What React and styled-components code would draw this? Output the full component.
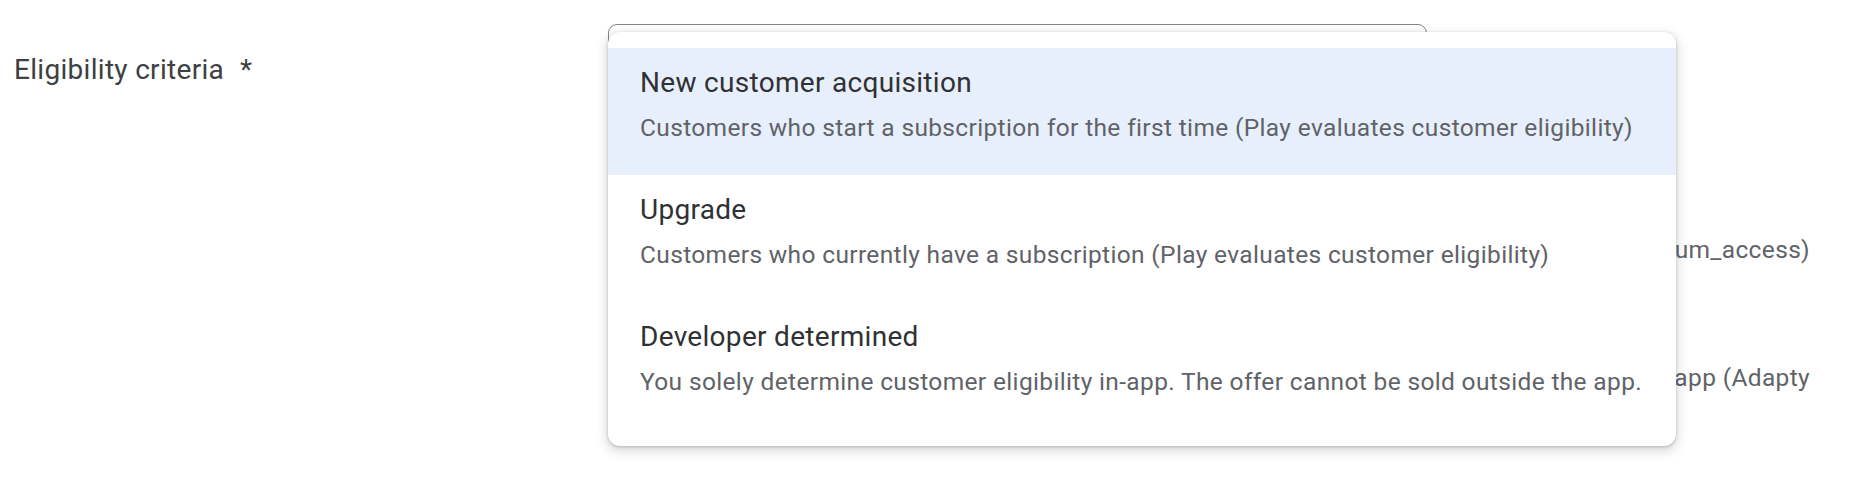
import React from 'react';
import styled, { createGlobalStyle } from 'styled-components';

const GlobalStyle = createGlobalStyle`
  html, body {
    margin: 0;
    padding: 0;
    background: #ffffff;
  }
  body {
    font-family: Roboto, "Liberation Sans", Arial, sans-serif;
    -webkit-font-smoothing: antialiased;
  }
`

const Page = styled.div`
  width: 1854px;
  height: 484px;
  overflow: hidden;
  background: #ffffff;
`

const FormRow = styled.div`
  display: flex;
  padding-left: 14px;
`

const Label = styled.div`
  width: 594px;
  flex-shrink: 0;
  padding-top: 50px;
  font-size: 28px;
  line-height: 40px;
  letter-spacing: 0.3px;
  color: #3c4043;
`

const Required = styled.span`
  margin-left: 16px;
`

const Field = styled.div`
  position: relative;
  width: 1202px;
  padding-top: 24px;
`

const SelectBox = styled.div`
  width: 819px;
  height: 96px;
  border: 1.5px solid #80868b;
  border-radius: 9px;
  box-sizing: border-box;
`

const Behind = styled.div`
  display: flex;
  flex-direction: column;
  gap: 92px;
  padding-top: 112px;
`

const BehindLine = styled.div`
  text-align: right;
  white-space: nowrap;
  font-size: 24.5px;
  line-height: 36px;
  letter-spacing: 0.35px;
  color: #5f6368;
`

const Menu = styled.ul`
  position: absolute;
  top: 32px;
  left: 0;
  z-index: 2;
  width: 1068px;
  margin: 0;
  padding: 16px 0 17px;
  list-style: none;
  background: #ffffff;
  border-radius: 12px;
  box-shadow: 0 1px 3px rgba(60, 64, 67, 0.3), 0 4px 10px 3px rgba(60, 64, 67, 0.15);
`

const Option = styled.li`
  height: 127px;
  box-sizing: border-box;
  padding: 15px 32px 0;
  background: ${p => (p.active ? '#e8effc' : 'transparent')};
`

const OptionTitle = styled.div`
  font-size: 28px;
  line-height: 40px;
  letter-spacing: 0.3px;
  color: #303134;
`

const OptionDesc = styled.div`
  margin-top: 7px;
  font-size: 24.5px;
  line-height: 36px;
  letter-spacing: 0.35px;
  color: #5f6368;
`

const options = [
  {
    title: 'New customer acquisition',
    desc: 'Customers who start a subscription for the first time (Play evaluates customer eligibility)',
  },
  {
    title: 'Upgrade',
    desc: 'Customers who currently have a subscription (Play evaluates customer eligibility)',
  },
  {
    title: 'Developer determined',
    desc: 'You solely determine customer eligibility in-app. The offer cannot be sold outside the app.',
  },
];

export default function App() {
  return (
    <Page>
      <GlobalStyle />
      <FormRow>
        <Label>
          Eligibility criteria<Required>*</Required>
        </Label>
        <Field>
          <SelectBox />
          <Behind>
            <BehindLine>Users who hold the entitlement (premium_access)</BehindLine>
            <BehindLine>Eligibility is checked in the app (Adapty</BehindLine>
          </Behind>
          <Menu>
            {options.map((o, i) => (
              <Option key={o.title} active={i === 0}>
                <OptionTitle>{o.title}</OptionTitle>
                <OptionDesc>{o.desc}</OptionDesc>
              </Option>
            ))}
          </Menu>
        </Field>
      </FormRow>
    </Page>
  );
}
